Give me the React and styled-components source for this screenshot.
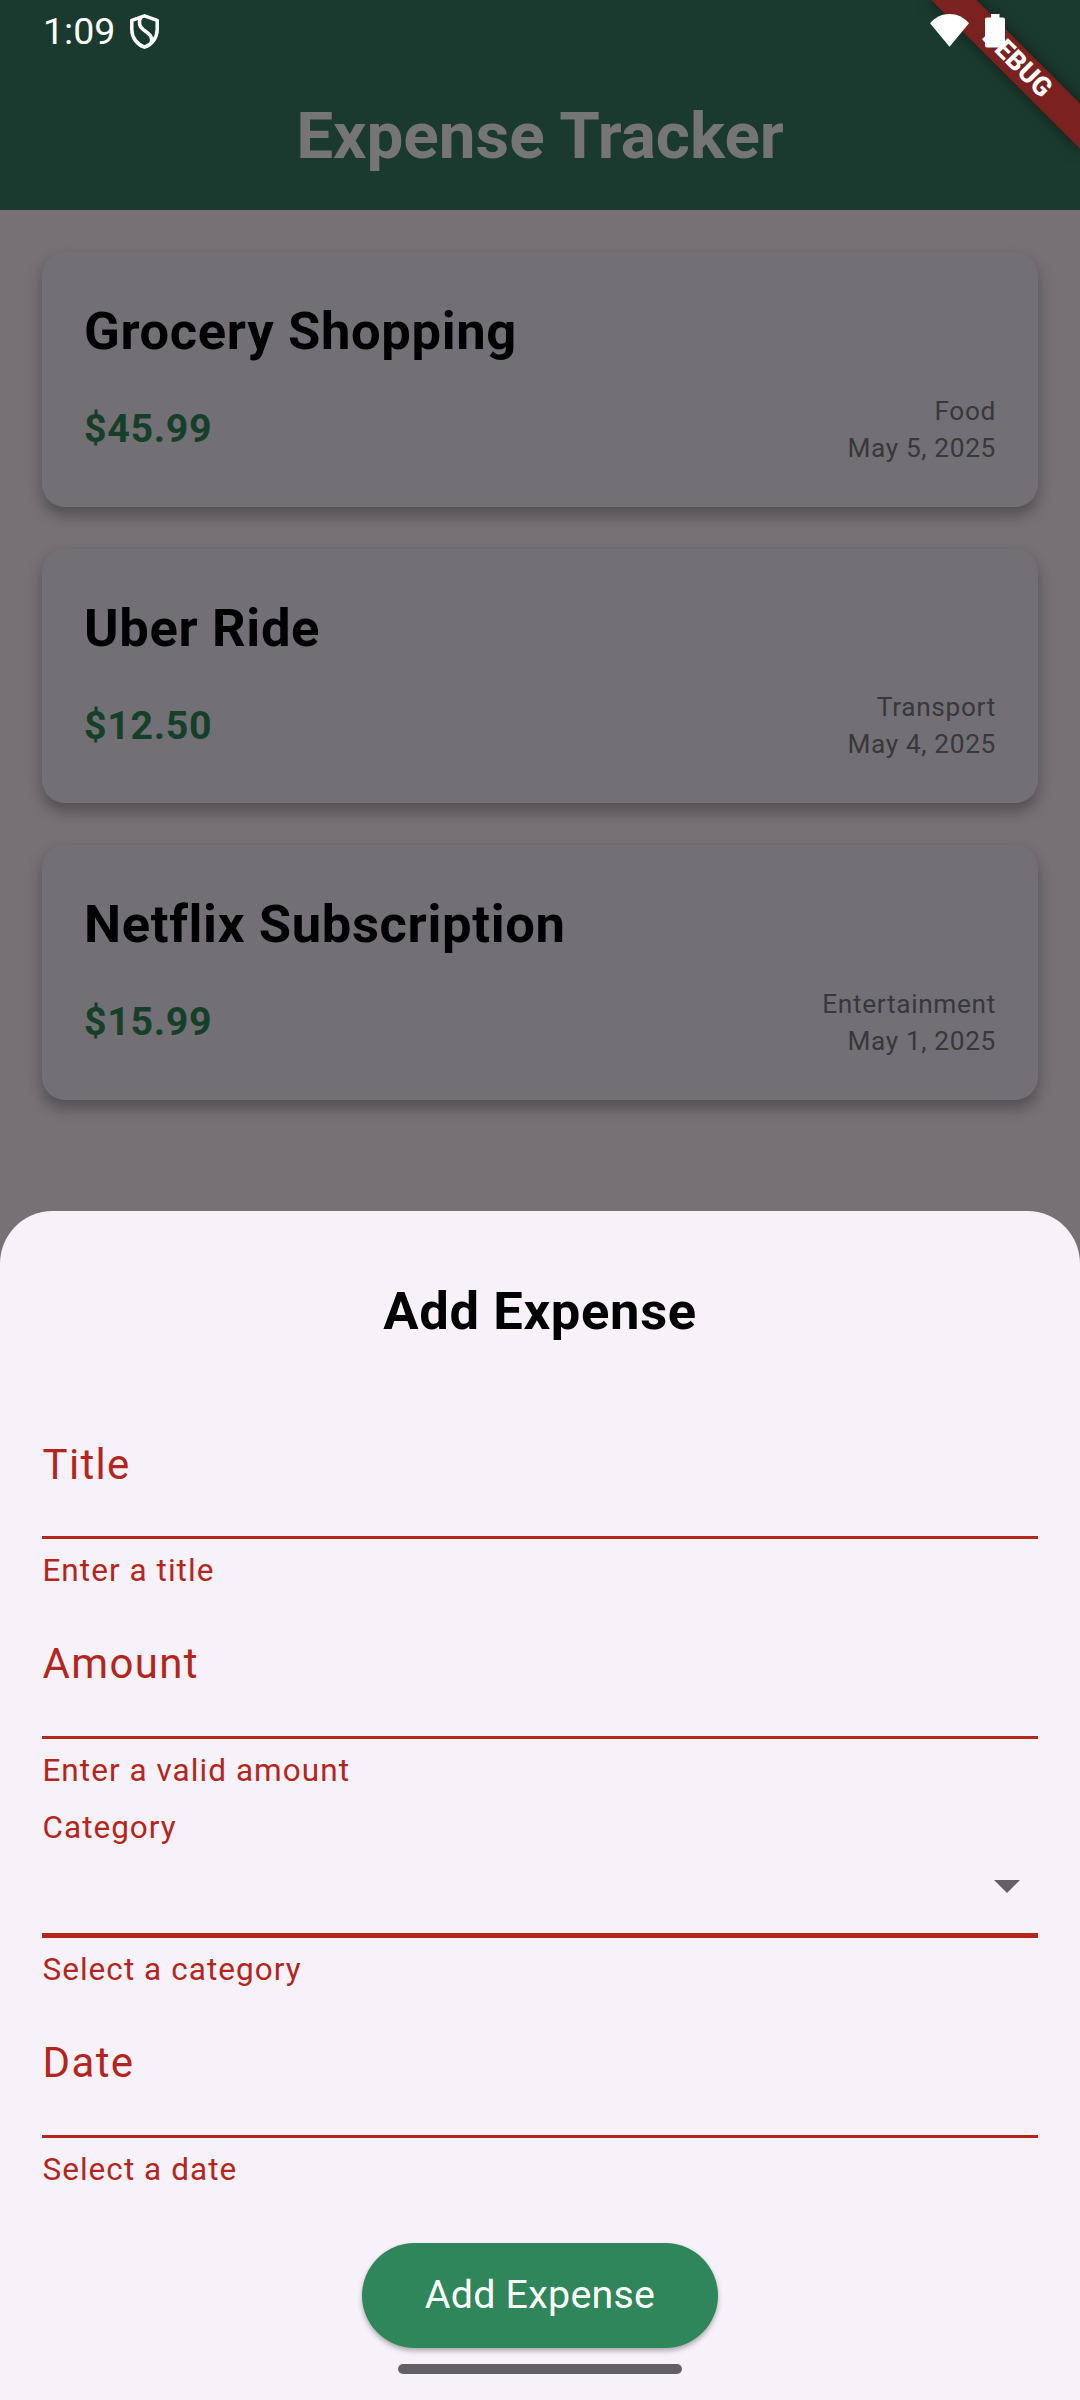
import React from "react";
import styled, { createGlobalStyle } from "styled-components";

const GlobalStyle = createGlobalStyle`
  * { box-sizing: border-box; }
  body { margin: 0; }
`;

const Screen = styled.div`
  position: relative;
  display: flex;
  flex-direction: column;
  width: 1080px;
  height: 2400px;
  overflow: hidden;
  background: #777175;
  font-family: Roboto, "Liberation Sans", sans-serif;
`;

const AppBar = styled.header`
  display: flex;
  flex: none;
  align-items: center;
  justify-content: center;
  height: 210px;
  padding-top: 62px;
  background: #1b3a2f;
`;

const AppTitle = styled.h1`
  margin: 0;
  color: #757575;
  font-size: 65.625px;
  font-weight: 700;
  line-height: 76px;
`;

const ExpenseList = styled.main`
  display: flex;
  flex-direction: column;
  gap: 42px;
  padding: 42px;
`;

const Card = styled.article`
  display: flex;
  flex-direction: column;
  gap: 22.8px;
  height: 254.6px;
  padding: 42px;
  border-radius: 23px;
  background: #727075;
  box-shadow: 0 9px 14px rgba(0, 0, 0, 0.27), 0 1px 14px rgba(88, 96, 102, 0.2);
  letter-spacing: 0.656px;
`;

const CardTitle = styled.h2`
  margin: 0;
  color: #000;
  font-size: 52.5px;
  font-weight: 700;
  line-height: 75px;
`;

const CardRow = styled.div`
  display: flex;
  align-items: center;
  justify-content: space-between;
`;

const Amount = styled.span`
  color: #163f2a;
  font-size: 39.375px;
  font-weight: 700;
  line-height: 56px;
`;

const Meta = styled.div`
  display: flex;
  flex-direction: column;
  align-items: flex-end;
  padding-top: 1px;
  color: #38373a;
  font-size: 26.25px;
  line-height: 37px;
`;

const Sheet = styled.section`
  position: absolute;
  right: 0;
  bottom: 0;
  left: 0;
  display: flex;
  flex-direction: column;
  align-items: center;
  height: 1189px;
  padding: 63px 42px 0;
  border-radius: 52.5px 52.5px 0 0;
  background: #f7f2fa;
`;

const SheetTitle = styled.h2`
  margin: 0 0 43px;
  color: #000;
  font-size: 52.5px;
  font-weight: 700;
  line-height: 75px;
  letter-spacing: 0.656px;
`;

const Form = styled.form`
  display: flex;
  flex-direction: column;
  align-self: stretch;
`;

const Field = styled.div`
  display: flex;
  flex-direction: column;
  height: 199.65px;
  color: #b3261e;
`;

const FieldBox = styled.div`
  display: flex;
  flex: none;
  align-items: ${(p) => (p.$floating ? "flex-start" : "center")};
  justify-content: space-between;
  height: 147px;
  padding-top: ${(p) => (p.$floating ? "15.4px" : "1px")};
  padding-left: 0.6px;
  border-bottom: ${(p) => (p.$floating ? "5px" : "3px")} solid #b3261e;
`;

const Label = styled.label`
  font-size: ${(p) => (p.$floating ? "31.5px" : "42px")};
  line-height: ${(p) => (p.$floating ? "42px" : "60px")};
  letter-spacing: ${(p) => (p.$floating ? "0.984px" : "1.3125px")};
`;

const ErrorText = styled.span`
  flex: none;
  margin-top: 11px;
  padding-left: 0.4px;
  font-size: 31.5px;
  line-height: 42px;
  letter-spacing: 1.05px;
`;

const Arrow = styled.svg`
  align-self: flex-end;
  width: 26px;
  height: 13px;
  margin: 0 18.5px 40px 0;
`;

const SubmitButton = styled.button`
  height: 105px;
  margin-top: 52.4px;
  padding: 0 63px;
  border: 0;
  border-radius: 52.5px;
  background: #2e865a;
  box-shadow: 0 3px 5px rgba(0, 0, 0, 0.3);
  color: #fff;
  font-family: inherit;
  font-size: 39.375px;
  line-height: 56px;
  letter-spacing: 0.2625px;
`;

const HomeIndicator = styled.div`
  width: 284px;
  height: 10px;
  margin-top: 16px;
  border-radius: 5px;
  background: #636164;
`;

const DebugBanner = styled.div`
  position: absolute;
  top: 47.35px;
  left: 911.9px;
  width: 210px;
  height: 31.5px;
  transform: rotate(45deg);
  background: #7b211f;
  box-shadow: 0 0 16px rgba(0, 0, 0, 0.5);
  color: #fff;
  font-size: 26.775px;
  font-weight: 800;
  line-height: 31.5px;
  text-align: center;
`;

const StatusBar = styled.div`
  position: absolute;
  top: 0;
  right: 0;
  left: 0;
  display: flex;
  align-items: flex-start;
  height: 63px;
  padding: 14px 75px 0 43px;
`;

const Clock = styled.span`
  color: #fff;
  font-size: 37.5px;
  line-height: 34px;
`;

const Shield = styled.svg`
  width: 29px;
  height: 35px;
  margin-left: 14.7px;
`;

const Wifi = styled.svg`
  width: 39px;
  height: 33px;
  margin-left: auto;
`;

const Battery = styled.svg`
  width: 20px;
  height: 34px;
  margin-left: 16px;
`;

const expenses = [
  { title: "Grocery Shopping", amount: "$45.99", category: "Food", date: "May 5, 2025" },
  { title: "Uber Ride", amount: "$12.50", category: "Transport", date: "May 4, 2025" },
  { title: "Netflix Subscription", amount: "$15.99", category: "Entertainment", date: "May 1, 2025" },
];

const fields = [
  { label: "Title", error: "Enter a title" },
  { label: "Amount", error: "Enter a valid amount" },
  { label: "Category", error: "Select a category", select: true },
  { label: "Date", error: "Select a date" },
];

export default function App() {
  return (
    <Screen>
      <GlobalStyle />
      <AppBar>
        <AppTitle>Expense Tracker</AppTitle>
      </AppBar>
      <ExpenseList>
        {expenses.map((e) => (
          <Card key={e.title}>
            <CardTitle>{e.title}</CardTitle>
            <CardRow>
              <Amount>{e.amount}</Amount>
              <Meta>
                <span>{e.category}</span>
                <span>{e.date}</span>
              </Meta>
            </CardRow>
          </Card>
        ))}
      </ExpenseList>

      <Sheet>
        <SheetTitle>Add Expense</SheetTitle>
        <Form>
          {fields.map((f) => (
            <Field key={f.label}>
              <FieldBox $floating={f.select}>
                <Label $floating={f.select}>{f.label}</Label>
                {f.select && (
                  <Arrow viewBox="0 0 26 13">
                    <path d="M0 0H26L13 13Z" fill="#636164" />
                  </Arrow>
                )}
              </FieldBox>
              <ErrorText>{f.error}</ErrorText>
            </Field>
          ))}
        </Form>
        <SubmitButton type="button">Add Expense</SubmitButton>
        <HomeIndicator />
      </Sheet>

      <DebugBanner>DEBUG</DebugBanner>
      <StatusBar>
        <Clock>1:09</Clock>
        <Shield viewBox="0 0 29 35" fill="none" stroke="#fff" strokeWidth="3.5" strokeLinejoin="round">
          <path d="M14.5 1.8 27.2 6.3V15.5C27.2 23.5 22 30.6 14.5 33.2 7 30.6 1.8 23.5 1.8 15.5V6.3Z" />
          <path d="M10.6 3.4C8.2 9 9.2 12.4 13.2 15.6 18.6 19.6 22.6 21.4 21.4 28" />
        </Shield>
        <Wifi viewBox="0 0 39 33">
          <path d="M0 9.2C5.4 3.2 12 0 19.5 0S33.6 3.2 39 9.2L19.5 32.7Z" fill="#fff" />
        </Wifi>
        <Battery viewBox="0 0 20 34">
          <path d="M6 0H14.5V3.4H18Q20 3.4 20 5.4V31.5Q20 33.5 18 33.5H2Q0 33.5 0 31.5V5.4Q0 3.4 2 3.4H6Z" fill="#fff" />
        </Battery>
      </StatusBar>
    </Screen>
  );
}
